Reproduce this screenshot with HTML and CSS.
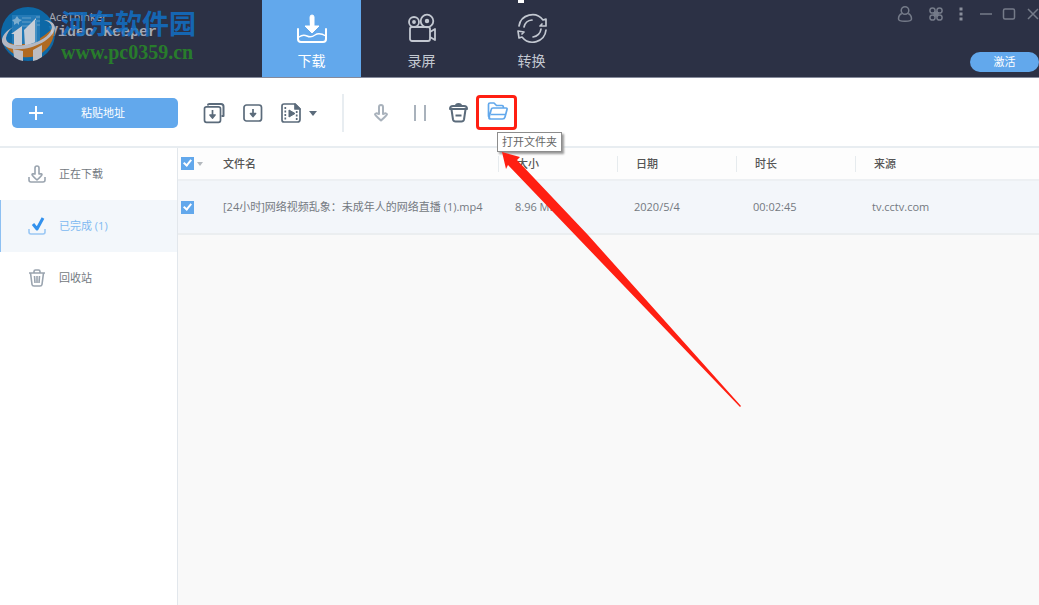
FILE: index.html
```html
<!DOCTYPE html>
<html lang="zh-CN">
<head>
    <meta charset="UTF-8">
    <meta name="viewport" content="width=device-width, initial-scale=1.0">
    <title>AceThinker Video Keeper</title>
    <link rel="stylesheet" href="styles.css">
</head>
<body>
    <header class="header">
        <div class="brand">
            <div class="brand-text">
                <div class="brand-name">AceThinker</div>
                <div class="brand-product">Video Keeper</div>
            </div>
            <div class="watermark">
                <svg class="watermark-logo" viewBox="0 0 56 58" width="56" height="58">
                    <circle cx="28" cy="29" r="27" fill="#0872b8"/>
                    <path d="M2 35 Q28 48 54 22 A27 27 0 0 1 2 35Z" fill="#c8741c"/>
                    <path d="M12 10h28v29H12z" fill="#2387cb"/>
                    <path d="M15 14l2-3 2 3 3 1-3 2v3l-2-2-3 2v-3l-2-2z" fill="#8bc3e7"/>
                    <path d="M22 13h9M22 17h9M22 21h8M36 12h4M36 16h4M36 20h4" stroke="#71b2df" stroke-width="1"/>
                    <path d="M11 29l11-8v19H14V29zM24 25l12-12v24l-11 4z" fill="#e4e9f0"/>
                    <path d="M36 15v23" stroke="#4fa2d9" stroke-width="2"/>
                    <path d="M13 44l10 2v10q-5-1-9-4zM33 45l9-5v12q-4 3-9 4z" fill="#d6d6da"/>
                    <path d="M13 22C-1 30-1 40 9 43C27 48 53 36 55 23C55 18 50 15 44 15C60 20 49 33 34 38C20 42 6 41 6 33Q7 27 13 22Z" fill="#ced0d8"/>
                </svg>
                <div class="watermark-text">
                    <div class="watermark-title">河东软件园</div>
                    <div class="watermark-url">www.pc0359.cn</div>
                </div>
            </div>
        </div>

        <nav class="tabs">
            <a class="tab active" href="#">
                <svg viewBox="0 0 32 32" width="32" height="32" fill="none" stroke="#fff" stroke-width="2" stroke-linecap="round" stroke-linejoin="round">
                    <path d="M2 17v10q0 3 3 3h22q3 0 3-3V17"/>
                    <path d="M3 25q4-3 8-1t8-1 11 1" stroke-width="1.4"/>
                    <path d="M14 5q0-2 2-2t2 2v9h5l-7 7-7-7h5z" fill="#fff" stroke-width="1"/>
                </svg>
                <span>下载</span>
            </a>
            <a class="tab" href="#">
                <svg viewBox="0 0 32 32" width="32" height="32" fill="none" stroke="#c3c8d1" stroke-width="1.8" stroke-linejoin="round">
                    <circle cx="8" cy="10" r="5"/>
                    <circle cx="21" cy="9" r="6.3"/>
                    <circle cx="8" cy="10" r="1" fill="#c3c8d1"/>
                    <circle cx="21" cy="9" r="1.3" fill="#c3c8d1"/>
                    <rect x="4" y="15" width="20" height="14" rx="2"/>
                    <path d="M24 20l5-3v11l-5-3"/>
                </svg>
                <span>录屏</span>
            </a>
            <a class="tab" href="#">
                <svg viewBox="0 0 32 32" width="32" height="32" fill="none" stroke="#c3c8d1" stroke-width="1.7" stroke-linecap="round" stroke-linejoin="round">
                    <path d="M3 14A13.500 13.500 0 0 1 27 8l3-1v7h-6l2-2"/>
                    <path d="M30 18A13.500 13.500 0 0 1 6 25l-3 1-1-7 6 1-2 2"/>
                    <path d="M8 15a9 9 0 0 1 8-7M25 17a9 9 0 0 1-8 8"/>
                </svg>
                <span>转换</span>
            </a>
        </nav>

        <div class="header-right">
            <div class="window-tools">
                <div class="tool-group">
                    <button type="button" class="icon-button" aria-label="账户">
                        <svg viewBox="0 0 18 18" width="18" height="18"><circle cx="9" cy="5.5" r="3.8"/><path d="M5.8 8.5Q2.5 10 2.5 14q0 2.3 6.5 2.3t6.5-2.3q0-4-3.3-5.5"/></svg>
                    </button>
                    <button type="button" class="icon-button" aria-label="工具">
                        <svg viewBox="0 0 18 18" width="18" height="18"><circle cx="5.5" cy="5.5" r="2.6"/><circle cx="12.5" cy="5.5" r="2.6"/><circle cx="5.5" cy="12.5" r="2.6"/><circle cx="12.5" cy="12.5" r="2.6"/><circle cx="9" cy="9" r="2" fill="#757b89"/></svg>
                    </button>
                    <button type="button" class="icon-button" aria-label="菜单">
                        <svg viewBox="0 0 6 18" width="6" height="18"><path d="M1.5 4h3M1.5 9h3M1.5 14h3" stroke="#8a8f9c" stroke-width="3"/></svg>
                    </button>
                </div>
                <div class="window-group">
                    <button type="button" class="icon-button" aria-label="最小化">
                        <svg viewBox="0 0 14 18" width="14" height="18"><path d="M1 9h12"/></svg>
                    </button>
                    <button type="button" class="icon-button" aria-label="最大化">
                        <svg viewBox="0 0 14 18" width="14" height="18"><rect x="1.5" y="4" width="11" height="10" rx="1.5"/></svg>
                    </button>
                    <button type="button" class="icon-button" aria-label="关闭">
                        <svg viewBox="0 0 14 18" width="14" height="18"><path d="M3 4l10 10M13 4L3 14"/></svg>
                    </button>
                </div>
            </div>
            <button type="button" class="activate-button">激活</button>
        </div>
        <span class="capture-handle"></span>
    </header>

    <div class="toolbar">
        <button type="button" class="paste-button">
            <svg viewBox="0 0 14 14" width="14" height="14"><path d="M7 0v14M0 7h14" stroke="#fff" stroke-width="2"/></svg>
            <span>粘贴地址</span>
        </button>
        <div class="tools">
            <button type="button" class="tool" aria-label="批量下载">
                <svg viewBox="0 0 22 22" width="22" height="22"><path d="M5 3.5V2.7Q5 2 6.5 2H18q2.5 0 2.5 2.5V14h-2" stroke-width="2"/><rect x="1.5" y="4.8" width="16" height="15.5" rx="2"/><path d="M9.5 8v8M7 13l2.5 3 2.5-3z" fill="#5b6b7b"/></svg>
            </button>
            <button type="button" class="tool" aria-label="下载">
                <svg viewBox="0 0 22 22" width="22" height="22"><rect x="2" y="3" width="17.5" height="16" rx="2.5"/><path d="M11 7v7M8.500 11.500l2.500 3 2.500-3z" fill="#5b6b7b"/></svg>
            </button>
            <button type="button" class="tool with-caret" aria-label="格式">
                <svg viewBox="0 0 22 22" width="22" height="22"><path d="M3 2h11l5 5v10.500q0 2.500-2.500 2.500H3q-2 0-2-2V4q0-2 2-2z"/><path d="M14 2l5 5h-5z" fill="#5b6b7b"/><path d="M4.300 5v13M15.700 9v9" stroke-dasharray="2 1.500"/><path d="M8 8l6 3.500-6 3.500z" fill="#5b6b7b" stroke-width="1"/></svg>
                <span class="caret"></span>
            </button>
        </div>
        <div class="tools tools-task">
            <button type="button" class="tool" aria-label="开始">
                <svg class="muted" viewBox="0 0 22 22" width="22" height="22"><path d="M9 5q0-2 2-2t2 2v7q4-1.500 4 .5 0 .5-6 6-6-5.500-6-6 0-2 4-.5z" stroke-width="2"/></svg>
            </button>
            <button type="button" class="tool" aria-label="暂停">
                <svg class="muted" viewBox="0 0 22 22" width="22" height="22"><path d="M6 3v16M16 3v16" stroke-width="2"/></svg>
            </button>
            <button type="button" class="tool" aria-label="删除">
                <svg viewBox="0 0 22 22" width="22" height="22"><path d="M2 7q0-3 3-3h11q3 0 3 3zM8 3.500q0-1.500 2.500-1.500T13 3.500" stroke-width="2"/><path d="M3.500 7.500L5 17.500q.5 2 2.500 2h6q2 0 2.500-2l1.500-10M7.500 13.500h6" stroke-width="2"/></svg>
            </button>
            <div class="open-folder">
                <button type="button" class="tool" aria-describedby="folder-tip" aria-label="打开文件夹">
                    <svg class="blue" viewBox="0 0 22 22" width="22" height="22"><path d="M3 19L1.500 16V4.500Q1.500 3 3 3h4l2.500 2.500H15Q16.500 5.500 16.500 8M3 19q-1.500 0-.8-2l2-7.500Q4.500 8 6 8h13q1.500 0 1 1.500L18 17q-.5 2-2.500 2zM4 14.500h14"/></svg>
                </button>
                <span class="highlight"></span>
                <span class="tooltip" id="folder-tip" role="tooltip">打开文件夹</span>
                <svg class="arrow" viewBox="0 0 240 256" width="240" height="256"><path d="M0 0l18 5-3 3 71 75 153 171-1 1L6 13l-2 4z" fill="#ff1f12"/></svg>
            </div>
        </div>
    </div>

    <div class="content">
        <aside class="sidebar">
            <a class="side-item" href="#">
                <svg viewBox="0 0 20 20" width="20" height="20"><path d="M8 4q0-2 2-2t2 2v6q3-.5 3 .5T10 16q-5-4.500-5-5.500T8 10zM2 13v3q0 2 2 2h12q2 0 2-2v-3"/></svg>
                <span>正在下载</span>
            </a>
            <a class="side-item active" href="#">
                <svg viewBox="0 0 20 20" width="20" height="20"><path d="M2 13v3q0 2 2 2h12q2 0 2-2v-3"/><path d="M6 8l4 5 6-11" stroke="#3291ed" stroke-width="3"/></svg>
                <span>已完成 (1)</span>
            </a>
            <a class="side-item" href="#">
                <svg viewBox="0 0 20 20" width="20" height="20"><path d="M2 5h16M7 5V3.500Q7 2 8.500 2h3Q13 2 13 3.500V5M3.500 5L5 16.500Q5.200 18 7 18h6q1.800 0 2-1.500L16.500 5M7.500 8l.5 7M10 8v7M12.500 8l-.5 7"/></svg>
                <span>回收站</span>
            </a>
        </aside>

        <main class="main">
            <table class="file-table">
                <colgroup>
                    <col class="col-check">
                    <col class="col-name">
                    <col class="col-info">
                    <col class="col-info">
                    <col class="col-info">
                    <col>
                </colgroup>
                <thead>
                    <tr>
                        <th class="check-cell"><input type="checkbox" class="checkbox" aria-label="全选" checked><span class="caret caret-small"></span></th>
                        <th class="name-cell">文件名</th>
                        <th>大小</th>
                        <th>日期</th>
                        <th>时长</th>
                        <th>来源</th>
                    </tr>
                </thead>
                <tbody>
                    <tr>
                        <td class="check-cell"><input type="checkbox" class="checkbox" aria-label="选择文件" checked></td>
                        <td class="name-cell">[24小时]网络视频乱象：未成年人的网络直播 (1).mp4</td>
                        <td>8.96 MB</td>
                        <td>2020/5/4</td>
                        <td>00:02:45</td>
                        <td>tv.cctv.com</td>
                    </tr>
                </tbody>
            </table>
        </main>
    </div>
</body>
</html>
```
FILE: styles.css
```css
* {
    box-sizing: border-box;
}
body {
    margin: 0;
    min-height: 100vh;
    display: flex;
    flex-direction: column;
    font-family: "Open Sans", "Noto Sans CJK SC", sans-serif;
    font-size: 11px;
    line-height: 16px;
    color: #737981;
    background-color: #fff;
}
button {
    padding: 0;
    border: none;
    background: none;
    font: inherit;
    cursor: pointer;
}
svg {
    display: block;
    flex: none;
}
a {
    text-decoration: none;
    color: inherit;
}

/* header */
.header {
    position: relative;
    display: flex;
    height: 78px;
    background-color: #2c3145;
    border-bottom: 1px solid #858a9b;
}
.brand {
    position: relative;
    width: 262px;
    padding: 9px 0 0 49px;
    color: #a4a8b4;
}
.brand-name {
    font-family: "Noto Sans", sans-serif;
    font-size: 11px;
}
.brand-product {
    font-family: "Liberation Mono", monospace;
    font-size: 15px;
    font-weight: bold;
}
.watermark {
    position: absolute;
    top: 5px;
    left: 0;
    display: flex;
    gap: 5px;
    opacity: 0.85;
}
.watermark-title {
    font-family: "Noto Sans CJK SC", sans-serif;
    font-size: 27px;
    font-weight: bold;
    line-height: 36px;
    color: #1270c6;
}
.watermark-url {
    font-family: "Liberation Serif", serif;
    font-size: 20px;
    font-weight: bold;
    line-height: 22px;
    color: #288a28;
}
.tabs {
    display: flex;
    gap: 11px;
}
.tab {
    width: 99px;
    display: flex;
    flex-direction: column;
    align-items: center;
    gap: 7px;
    padding-top: 12px;
    font-size: 14px;
    line-height: 20px;
    color: #c3c8d1;
}
.tab.active {
    background-color: #62a8ec;
    color: #fff;
}
.header-right {
    margin-left: auto;
    display: flex;
    flex-direction: column;
    align-items: flex-end;
    justify-content: space-between;
    padding: 5px 0;
}
.window-tools {
    display: flex;
    gap: 15px;
}
.tool-group {
    display: flex;
    gap: 13px;
}
.window-group {
    display: flex;
    gap: 9px;
}
.icon-button svg {
    fill: none;
    stroke: #757b89;
    stroke-width: 1.5;
}
.activate-button {
    width: 69px;
    height: 20px;
    border-radius: 10px;
    background-color: #62a8ec;
    color: #fff;
}
.capture-handle {
    position: absolute;
    top: 0;
    left: 518px;
    width: 6px;
    height: 3px;
    background-color: #fff;
}

/* toolbar */
.toolbar {
    display: flex;
    align-items: center;
    height: 70px;
    padding: 2px 0 0 12px;
    border-bottom: 2px solid #e8edf1;
}
.paste-button {
    display: flex;
    align-items: center;
    width: 166px;
    height: 30px;
    gap: 38px;
    padding-left: 17px;
    border-radius: 5px;
    background-color: #62a8ec;
    color: #fff;
}
.tools {
    display: flex;
    align-items: center;
    gap: 17px;
    height: 38px;
    margin-left: 25px;
}
.tools-task {
    padding-left: 26px;
    border-left: 2px solid #e8edf1;
}
.tool svg {
    fill: none;
    stroke: #5b6b7b;
    stroke-width: 1.7;
    stroke-linejoin: round;
}
.tool svg.muted {
    stroke: #a9b2bc;
}
.tool svg.blue {
    stroke: #62a8ec;
}
.with-caret {
    display: flex;
    align-items: center;
    gap: 6px;
}
.caret {
    border: 4px solid transparent;
    border-top: 5px solid #5b6b7b;
    border-bottom: none;
}
.caret-small {
    border-width: 4px 3px 0;
    border-top-color: #b4b9be;
}
.open-folder {
    position: relative;
    z-index: 1;
}
.highlight {
    position: absolute;
    top: -5px;
    left: -11px;
    width: 41px;
    height: 35px;
    border: 3px solid #ff1f12;
    border-radius: 4px;
    pointer-events: none;
}
.tooltip {
    position: absolute;
    top: 32px;
    left: 10px;
    width: 65px;
    padding: 1px 0;
    border: 1px solid #8d8d8d;
    background-color: #fff;
    box-shadow: 2px 2px 2px #999;
    text-align: center;
    white-space: nowrap;
    color: #666;
}
.arrow {
    position: absolute;
    top: 52px;
    left: 15px;
    pointer-events: none;
}

/* content */
.content {
    flex: 1;
    display: flex;
}
.sidebar {
    width: 178px;
    flex: none;
    border-right: 1px solid #e2e7ec;
}
.side-item {
    display: flex;
    align-items: center;
    gap: 12px;
    height: 52px;
    padding-left: 26px;
    border-left: 1px solid transparent;
}
.side-item svg {
    fill: none;
    stroke: #9aa4af;
    stroke-width: 1.6;
    stroke-linejoin: round;
}
.side-item.active {
    background-color: #f3f7fb;
    border-left-color: #8dc0f2;
    color: #80b9f1;
}
.side-item.active svg {
    stroke: #9ac7f4;
}
.main {
    flex: 1;
    background-color: #f9f9f9;
}
.file-table {
    width: 100%;
    table-layout: fixed;
    border-collapse: separate;
    border-spacing: 0;
    text-align: left;
}
.col-check {
    width: 36px;
}
.col-name {
    width: 284px;
}
.col-info {
    width: 119px;
}
.file-table th {
    position: relative;
    height: 33px;
    padding: 0 0 0 19px;
    border-bottom: 2px solid #edf0f3;
    background-color: #fdfdfd;
    font-weight: 500;
    color: #555;
}
/* short divider in front of each info column */
.file-table th + th + th::before {
    content: "";
    position: absolute;
    top: 8px;
    left: 0;
    width: 1px;
    height: 16px;
    background-color: #e6ebee;
}
.file-table td {
    height: 54px;
    padding: 0 0 0 17px;
    border-bottom: 2px solid #ebeef0;
    background-color: #f3f6fa;
    white-space: nowrap;
}
.file-table .check-cell {
    padding-left: 3px;
    font-size: 0;
    line-height: 0;
}
.file-table .name-cell {
    padding-left: 9px;
}
.checkbox {
    appearance: none;
    position: relative;
    display: inline-block;
    width: 13px;
    height: 13px;
    margin: 0;
    border: 1px solid #62a8ec;
    background-color: #fff;
    vertical-align: middle;
}
.checkbox:checked {
    background-color: #62a8ec;
}
.checkbox:checked::before {
    content: "";
    position: absolute;
    top: 0;
    left: 3px;
    width: 3px;
    height: 6px;
    border: solid #fff;
    border-width: 0 2px 2px 0;
    transform: rotate(40deg);
}
.check-cell .caret {
    display: inline-block;
    margin-left: 3px;
    vertical-align: middle;
}
```
